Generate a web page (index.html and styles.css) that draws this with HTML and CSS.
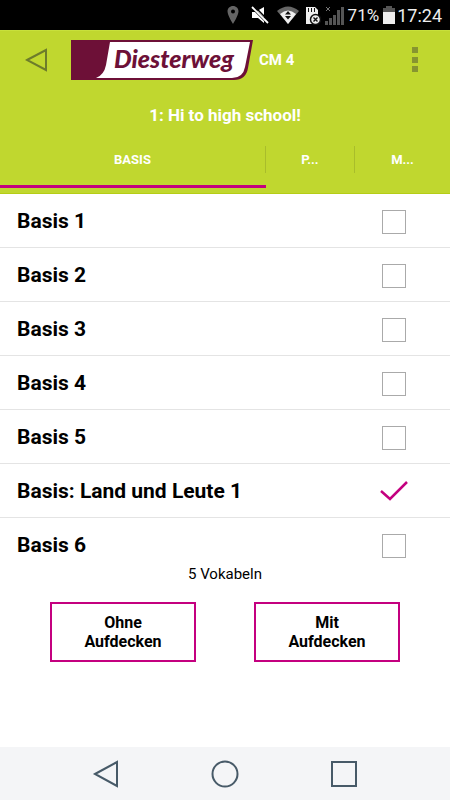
FILE: index.html
```html
<!DOCTYPE html>
<html lang="de">
<head>
<meta charset="utf-8">
<meta name="viewport" content="width=device-width, initial-scale=1">
<title>Diesterweg CM 4</title>
<link rel="stylesheet" href="styles.css">
</head>
<body>
<div class="screen">
  <div class="status">
    <svg class="pin" width="12" height="20" viewBox="0 0 12 20"><path fill="#656565" fill-rule="evenodd" d="M6 1C2.800 1 .5 3.300.5 6.300.5 10.500 6 19 6 19s5.500-8.500 5.500-12.700C11.500 3.300 9.200 1 6 1zm0 3.500a2 2 0 1 1 0 4 2 2 0 0 1 0-4z"/></svg>
    <svg class="mute" width="18" height="18" viewBox="0 0 18 18"><path fill="#fff" d="M1 6h3l9 9v2l-6-5H1zM6 5l7-4v10z"/><path stroke="#000" stroke-width="1.500" d="M3 0l15 15"/><path stroke="#fff" stroke-width="1.800" d="M1 1l16 16"/></svg>
    <svg class="wifi" width="22" height="18" viewBox="0 0 22 18"><path fill="#666" d="M0 5Q11-4 22 5L11 18z"/><path fill="#eee" d="M3 8Q11 1 19 8L11 18z"/><path fill="#111" d="M11 5l3 3.500H8zM8 10h6l-3 3.500z"/></svg>
    <svg class="sd" width="16" height="19" viewBox="0 0 16 19"><path fill="#eee" d="M1 1h9l3 3v14H1z"/><path stroke="#111" d="M3.500 2v4M6.500 2v4M9.500 2v4"/><circle cx="10.500" cy="13.500" r="5" fill="#eee" stroke="#111" stroke-width="1.500"/><path stroke="#111" stroke-width="1.400" d="M8.500 11.500l4 4m0-4l-4 4"/></svg>
    <svg class="signal" width="19" height="19" viewBox="0 0 19 19"><path fill="#555" d="M0 15h3v4H0zM4 12h3v7H4zM8 9h3v10H8zM12 4h3v15h-3zM16 1h3v18h-3z"/><path stroke="#777" d="M1 1l4 4m0-4L1 5"/></svg>
    <span class="percent">71%</span>
    <svg class="battery" width="12" height="18" viewBox="0 0 12 18"><path fill="#555" d="M3 0h6v2h3v5H0V2h3z"/><path fill="#eee" d="M0 6h12v12H0z"/></svg>
    <span class="clock">17:24</span>
  </div>
  <header class="header">
    <div class="bar">
      <button class="icon-button" type="button" aria-label="Zurück"><svg width="24" height="24" viewBox="0 0 24 24"><path fill="none" stroke="#6d7c2b" stroke-width="2" d="M2 12L21 2v20z"/></svg></button>
      <svg class="logo" width="182" height="40" viewBox="0 0 182 40" role="img" aria-label="Diesterweg">
        <path fill="#6d1037" d="M0 0h182l-5 28q-2 12-14 12H0z"/>
        <path fill="#fff" d="M39 2h140l-5 25q-2 11-13 11H25q8-3 10-13z"/>
        <text class="logo-text" x="43" y="28">Diesterweg</text>
      </svg>
      <span class="course">CM 4</span>
      <button class="icon-button menu" type="button" aria-label="Menü"><svg width="6" height="26" viewBox="0 0 6 26"><path fill="#879530" d="M0 0h6v6H0zM0 10h6v6H0zM0 19h6v6H0z"/></svg></button>
    </div>
    <h1 class="title">1: Hi to high school!</h1>
    <nav class="tabs">
      <button class="tab active" type="button"><span>BASIS</span></button>
      <button class="tab" type="button"><span>P...</span></button>
      <button class="tab" type="button"><span>M...</span></button>
    </nav>
  </header>
  <main class="main">
    <div class="list">
      <label class="row"><span>Basis 1</span><input type="checkbox"></label>
      <label class="row"><span>Basis 2</span><input type="checkbox"></label>
      <label class="row"><span>Basis 3</span><input type="checkbox"></label>
      <label class="row"><span>Basis 4</span><input type="checkbox"></label>
      <label class="row"><span>Basis 5</span><input type="checkbox"></label>
      <label class="row"><span>Basis: Land und Leute 1</span><input type="checkbox" checked><svg class="tick" width="28" height="20" viewBox="0 0 28 20"><path fill="none" stroke="#c4007f" stroke-width="2.500" d="M1 10l9 8L27 1"/></svg></label>
      <label class="row last"><span>Basis 6</span><input type="checkbox"></label>
    </div>
    <p class="count">5 Vokabeln</p>
    <div class="actions">
      <button class="action" type="button">Ohne<br>Aufdecken</button>
      <button class="action" type="button">Mit<br>Aufdecken</button>
    </div>
  </main>
  <nav class="system">
    <button class="icon-button" type="button" aria-label="Zurück"><svg width="28" height="28" viewBox="0 0 28 28"><path fill="none" stroke="#475a68" stroke-width="2" d="M3 14L25 2v24z"/></svg></button>
    <button class="icon-button" type="button" aria-label="Startseite"><svg width="28" height="28" viewBox="0 0 28 28"><circle cx="14" cy="14" r="12.500" fill="none" stroke="#475a68" stroke-width="2"/></svg></button>
    <button class="icon-button" type="button" aria-label="Übersicht"><svg width="28" height="28" viewBox="0 0 28 28"><path fill="none" stroke="#475a68" stroke-width="2" d="M2 2h24v24H2z"/></svg></button>
  </nav>
</div>
</body>
</html>
```
FILE: styles.css
```css
* { box-sizing: border-box; }

body {
  margin: 0;
  background: #fff;
  color: #000;
  font-family: Roboto, "Liberation Sans", sans-serif;
}

button {
  margin: 0;
  padding: 0;
  border: 0;
  background: none;
  color: inherit;
  font: inherit;
}

svg { display: block; flex: none; }

.screen {
  display: flex;
  flex-direction: column;
  min-height: 100vh;
}

.status {
  display: flex;
  align-items: center;
  justify-content: flex-end;
  height: 30px;
  padding-right: 8px;
  background: #000;
  color: #eee;
}

.pin { margin-right: 12px; }
.mute { margin-right: 8px; }
.wifi { margin-right: 6px; }
.sd { margin-right: 4px; }
.signal { margin-right: 4px; }
.percent { margin-right: 4px; font-size: 17px; }
.battery { margin-right: 2px; }
.clock { font-size: 18px; }

.header {
  border-bottom: 1px solid #b5cd16;
  background: #c0d72f;
  box-shadow: inset 0 1px #c8e03c;
  color: #fff;
}

.bar {
  display: flex;
  align-items: center;
  height: 60px;
  padding: 0 32px 0 25px;
}

.icon-button {
  display: flex;
  align-items: center;
  justify-content: center;
}

.logo { margin: 0 6px 0 22px; }

.logo-text {
  fill: #6d1037;
  font: italic 900 25px Lato, "Open Sans", sans-serif;
}

.course { font-size: 15px; font-weight: 700; }
.menu { margin-left: auto; }

.title {
  margin: 0;
  padding: 13px 0 12px;
  font-size: 17px;
  line-height: 24px;
  font-weight: 700;
  text-align: center;
}

.tabs {
  display: grid;
  grid-template-columns: 266fr 89fr 95fr;
  height: 54px;
  padding-bottom: 5px;
}

.tab {
  display: flex;
  padding: 7px 0 12px;
  border-bottom: 3px solid transparent;
  font-size: 13px;
  font-weight: 700;
}

.tab span {
  flex: 1;
  padding: 6px 0 5px;
  border-right: 1px solid #a9bd2b;
  line-height: 16px;
  text-align: center;
}

.tab:last-child span { border-right: 0; }

.tab.active { border-bottom-color: #c4007f; }

.main { flex: 1; }

.row {
  display: grid;
  grid-template-columns: 1fr 28px;
  align-items: center;
  justify-items: center;
  height: 54px;
  padding: 1px 42px 0 17px;
  border-bottom: 1px solid #e4e4e4;
  font-size: 21px;
  font-weight: 700;
}

.row span { justify-self: start; }

.row input {
  grid-area: 1 / 2;
  width: 24px;
  height: 24px;
  margin: 2px 0 0;
  border: 1px solid #aaa;
  background: #fff;
  appearance: none;
}

.row input:checked { border-color: transparent; }

.tick { grid-area: 1 / 2; }

.row.last { height: 48px; padding-top: 6px; border-bottom: 0; }

.count {
  margin: 0;
  font-size: 15px;
  line-height: 16px;
  text-align: center;
}

.actions {
  display: flex;
  gap: 58px;
  padding: 20px 50px;
}

.action {
  flex: 1;
  height: 60px;
  border: 2px solid #c4007f;
  font-size: 16px;
  line-height: 19px;
  font-weight: 700;
}

.system {
  display: flex;
  align-items: center;
  justify-content: space-between;
  height: 53px;
  padding: 0 92px;
  background: #f4f5f7;
}
```
